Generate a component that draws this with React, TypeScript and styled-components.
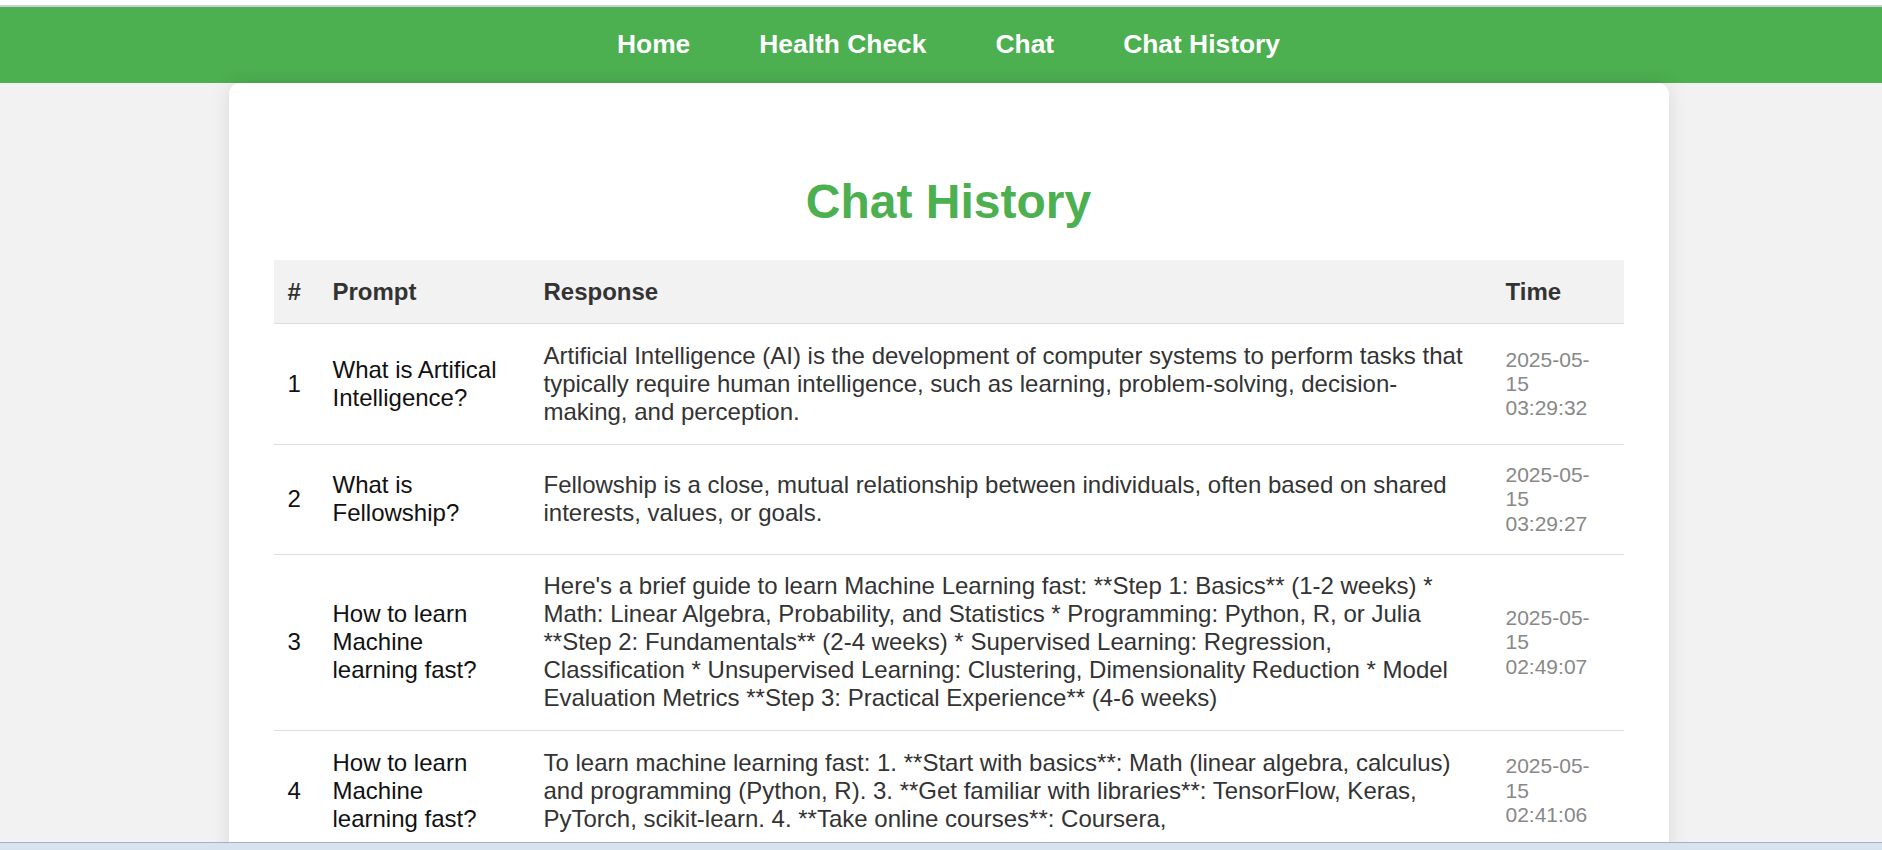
import React from "react";
import styled, { createGlobalStyle } from "styled-components";

const GlobalStyle = createGlobalStyle`
  html, body {
    margin: 0;
    padding: 0;
    overflow: hidden;
    background: #f2f2f2;
    font-family: "Liberation Sans", Arial, Helvetica, sans-serif;
  }
`;

const Page = styled.div`
  min-height: 850px;
  background: #f2f2f2;
`;

const BrowserEdge = styled.div`
  height: 5px;
  background: #ffffff;
  border-bottom: 2px solid #cfcfcf;
`;

const NavBar = styled.nav`
  height: 76px;
  background: #4caf50;
  display: flex;
  align-items: center;
  justify-content: center;
  gap: 69px;
  padding-left: 15px;
`;

const NavLink = styled.a`
  color: #ffffff;
  font-weight: 700;
  font-size: 26.4px;
  text-decoration: none;
  margin-top: -2px;
`;

const Main = styled.main`
  padding-left: 15px;
`;

const Card = styled.section`
  width: 1440px;
  box-sizing: border-box;
  margin: 0 auto;
  background: #ffffff;
  border-radius: 11px;
  box-shadow: 0 0 20px rgba(0, 0, 0, 0.1);
  padding: 45px 45px 60px;
`;

const Title = styled.h1`
  margin: 45.6px 0 31.4px;
  text-align: center;
  color: #4caf50;
  font-size: 48px;
  font-weight: 700;
`;

const Table = styled.table`
  width: 1350px;
  border-collapse: collapse;
  table-layout: fixed;
  font-size: 24px;
`;

const HeadRow = styled.tr`
  background: #f2f2f2;
  border-bottom: 1px solid #dddddd;
`;

const BodyRow = styled.tr`
  border-bottom: 1px solid #dddddd;
`;

const HeadCell = styled.th`
  text-align: left;
  font-weight: 700;
  color: #333333;
  line-height: 28px;
  padding: 17.75px 14px;
  vertical-align: middle;
`;

type Kind = "index" | "prompt" | "response" | "time";

const cellColor: Record<Kind, string> = {
  index: "#111111",
  prompt: "#111111",
  response: "#333333",
  time: "#888888",
};

const cellPadRight: Record<Kind, number> = {
  index: 14,
  prompt: 23,
  response: 22,
  time: 22,
};

const Cell = styled.td<{ $kind: Kind }>`
  padding: 17.75px ${(p) => cellPadRight[p.$kind]}px 17.75px 14px;
  vertical-align: middle;
  color: ${(p) => cellColor[p.$kind]};
  font-size: ${(p) => (p.$kind === "time" ? "21px" : "24px")};
  line-height: ${(p) => (p.$kind === "time" ? "24.4px" : "28px")};
`;

const Taskbar = styled.div`
  position: fixed;
  left: 0;
  right: 0;
  bottom: 0;
  height: 7px;
  background: #d7e3ef;
  border-top: 1px solid #a8b0b8;
`;

const rows = [
  {
    prompt: "What is Artifical Intelligence?",
    response:
      "Artificial Intelligence (AI) is the development of computer systems to perform tasks that typically require human intelligence, such as learning, problem-solving, decision-making, and perception.",
    time: "2025-05-15 03:29:32",
  },
  {
    prompt: "What is Fellowship?",
    response:
      "Fellowship is a close, mutual relationship between individuals, often based on shared interests, values, or goals.",
    time: "2025-05-15 03:29:27",
  },
  {
    prompt: "How to learn Machine learning fast?",
    response:
      "Here's a brief guide to learn Machine Learning fast: **Step 1: Basics** (1-2 weeks) * Math: Linear Algebra, Probability, and Statistics * Programming: Python, R, or Julia **Step 2: Fundamentals** (2-4 weeks) * Supervised Learning: Regression, Classification * Unsupervised Learning: Clustering, Dimensionality Reduction * Model Evaluation Metrics **Step 3: Practical Experience** (4-6 weeks)",
    time: "2025-05-15 02:49:07",
  },
  {
    prompt: "How to learn Machine learning fast?",
    response:
      "To learn machine learning fast: 1. **Start with basics**: Math (linear algebra, calculus) and programming (Python, R). 3. **Get familiar with libraries**: TensorFlow, Keras, PyTorch, scikit-learn. 4. **Take online courses**: Coursera,",
    time: "2025-05-15 02:41:06",
  },
];

export default function App() {
  return (
    <Page>
      <GlobalStyle />
      <BrowserEdge />
      <NavBar>
        <NavLink href="#">Home</NavLink>
        <NavLink href="#">Health Check</NavLink>
        <NavLink href="#">Chat</NavLink>
        <NavLink href="#">Chat History</NavLink>
      </NavBar>
      <Main>
        <Card>
          <Title>Chat History</Title>
          <Table>
            <colgroup>
              <col style={{ width: 45 }} />
              <col style={{ width: 211 }} />
              <col style={{ width: 962 }} />
              <col style={{ width: 132 }} />
            </colgroup>
            <thead>
              <HeadRow>
                <HeadCell>#</HeadCell>
                <HeadCell>Prompt</HeadCell>
                <HeadCell>Response</HeadCell>
                <HeadCell>Time</HeadCell>
              </HeadRow>
            </thead>
            <tbody>
              {rows.map((r, i) => (
                <BodyRow key={i}>
                  <Cell $kind="index">{i + 1}</Cell>
                  <Cell $kind="prompt">{r.prompt}</Cell>
                  <Cell $kind="response">{r.response}</Cell>
                  <Cell $kind="time">{r.time}</Cell>
                </BodyRow>
              ))}
            </tbody>
          </Table>
        </Card>
      </Main>
      <Taskbar />
    </Page>
  );
}
